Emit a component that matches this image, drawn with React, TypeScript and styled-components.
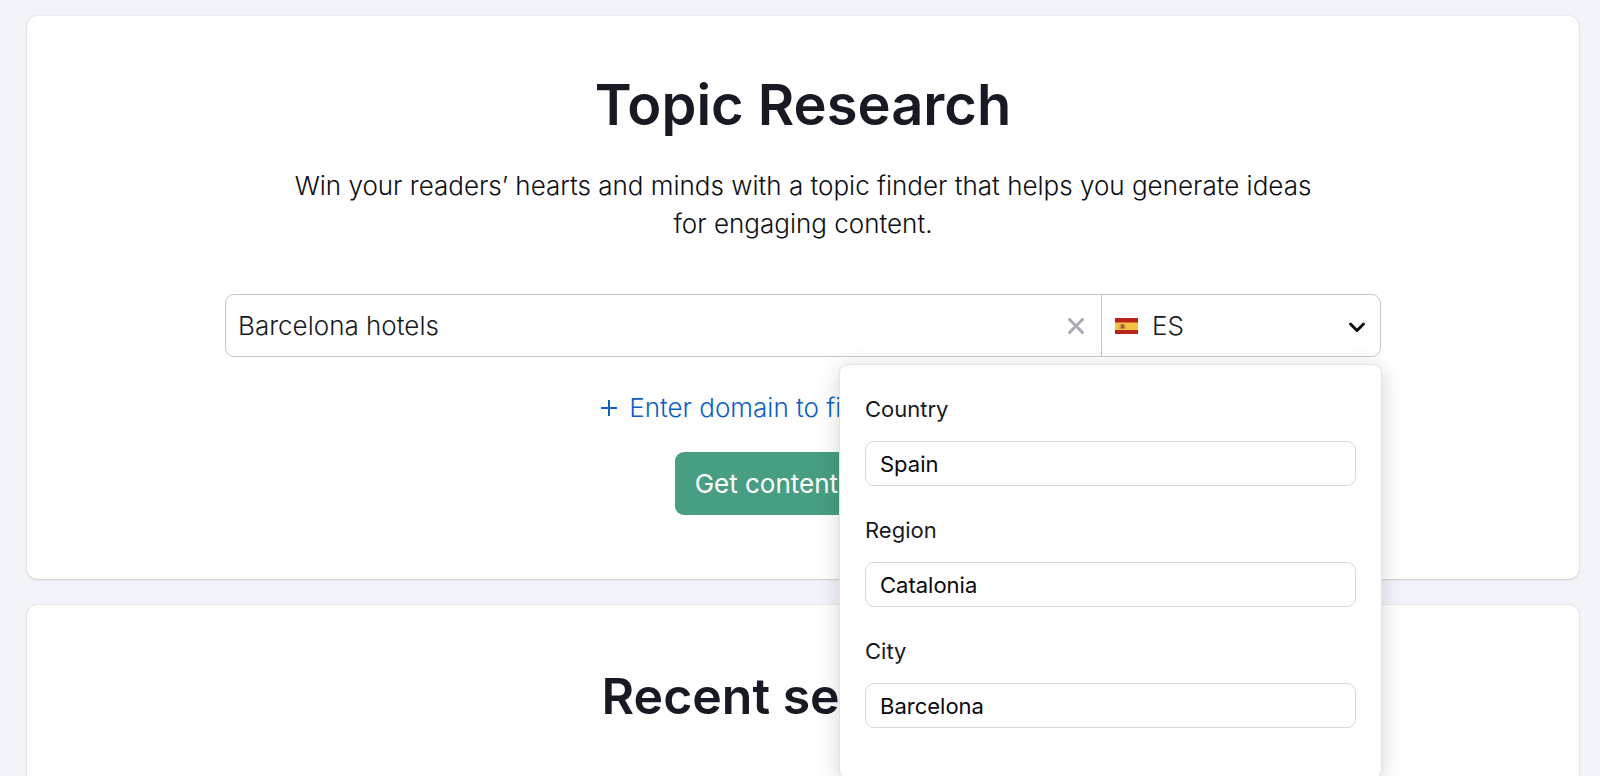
import React, { useState } from "react";
import styled, { createGlobalStyle } from "styled-components";

const GlobalStyle = createGlobalStyle`
  *, *::before, *::after { box-sizing: border-box; }
  body {
    margin: 0;
    background: #f3f4f9;
    color: #171a22;
    font-family: Inter, "Liberation Sans", sans-serif;
  }
  button, input { font: inherit; color: inherit; }
`;

const Page = styled.main`
  display: flex;
  flex-direction: column;
  gap: 26px;
  height: 100vh;
  padding: 16px 21px 0 27px;
  overflow: hidden;
`;

const Card = styled.section<{ $fill?: boolean }>`
  display: flex;
  flex-direction: column;
  align-items: center;
  flex: ${(p) => (p.$fill ? "1 0 auto" : "0 0 auto")};
  padding: ${(p) => (p.$fill ? "60px 24px" : "54px 24px 64px")};
  border-radius: ${(p) => (p.$fill ? "10px 10px 0 0" : "10px")};
  background: #fff;
  box-shadow: 0 0 2px rgba(25, 27, 35, 0.14), 0 1px 2px rgba(25, 27, 35, 0.14);
`;

const Title = styled.h1`
  margin: 0;
  font-size: 56px;
  font-weight: 600;
  line-height: 70px;
`;

const Subtitle = styled.h2`
  margin: 0;
  font-size: 50px;
  font-weight: 600;
  line-height: 62px;
`;

const Lead = styled.p`
  max-width: 1040px;
  margin: 27px 0 0;
  color: #0c0d12;
  font-size: 26px;
  font-weight: 300;
  line-height: 38px;
  text-align: center;
`;

const SearchForm = styled.form`
  display: flex;
  flex-direction: column;
  align-items: center;
  width: 100%;
  max-width: 1156px;
  margin-top: 51px;
`;

const SearchBar = styled.div`
  position: relative;
  display: flex;
  width: 100%;
  height: 63px;
  border: 1px solid #c4c7cf;
  border-radius: 9px;
  background: #fff;
`;

const Query = styled.input`
  flex: 1;
  min-width: 0;
  padding: 0 12px;
  border: 0;
  outline: 0;
  background: transparent;
  font-size: 26px;
  font-weight: 300;
`;

const ClearButton = styled.button`
  display: flex;
  align-items: center;
  justify-content: center;
  width: 50px;
  padding: 0;
  border: 0;
  background: transparent;
  cursor: pointer;
`;

const LocationButton = styled.button`
  display: flex;
  align-items: center;
  gap: 14px;
  width: 279px;
  padding: 0 14px 0 13px;
  border: 0;
  border-left: 1px solid #c4c7cf;
  background: transparent;
  font-size: 26px;
  font-weight: 300;
  text-align: left;
  cursor: pointer;
`;

const Code = styled.span`
  flex: 1;
`;

const DomainLink = styled.a`
  display: flex;
  align-items: center;
  gap: 12px;
  margin-top: 32px;
  color: #0b5fc4;
  font-size: 26px;
  font-weight: 300;
  line-height: 38px;
  text-decoration: none;
`;

const SubmitButton = styled.button`
  height: 63px;
  margin-top: 25px;
  padding: 0 20px;
  border: 0;
  border-radius: 9px;
  background: #479e82;
  color: #fff;
  font-size: 26px;
  font-weight: 400;
  cursor: pointer;
`;

const LocationPanel = styled.div`
  position: absolute;
  z-index: 1;
  top: calc(100% + 8px);
  right: -2px;
  display: flex;
  flex-direction: column;
  gap: 28px;
  width: 543px;
  padding: 28px 25px 50px;
  border: 1px solid #e2e3ea;
  border-radius: 9px;
  background: #fff;
  box-shadow: 0 4px 22px rgba(25, 27, 35, 0.18);
`;

const Field = styled.label`
  display: flex;
  flex-direction: column;
  gap: 16px;
  font-size: 22px;
  font-weight: 400;
  line-height: 32px;
`;

const FieldInput = styled.input`
  width: 100%;
  height: 45px;
  padding: 0 14px;
  border: 1px solid #d5d7de;
  border-radius: 9px;
  outline: 0;
  background: #fff;
  color: #08090d;
`;

const ClearIcon = () => (
  <svg width="18" height="18" viewBox="0 0 18 18" fill="none" stroke="#a7a9b4" strokeWidth="3" strokeLinecap="round" aria-hidden="true">
    <path d="M2.500 2.500l13 13M15.500 2.500l-13 13" />
  </svg>
);

const ChevronIcon = () => (
  <svg width="18" height="18" viewBox="0 0 18 18" fill="none" stroke="#0c0d12" strokeWidth="3" strokeLinecap="round" strokeLinejoin="round" aria-hidden="true">
    <path d="M2.500 7l6.500 6.500L15.500 7" />
  </svg>
);

const PlusIcon = () => (
  <svg width="16" height="16" viewBox="0 0 16 16" fill="none" stroke="#0b5fc4" strokeWidth="2" aria-hidden="true">
    <path d="M8 0v16M0 8h16" />
  </svg>
);

const SpainFlag = () => (
  <svg width="23" height="16" viewBox="0 0 23 16" aria-hidden="true">
    <path fill="#b9231c" d="M0 0h23v16H0z" />
    <path fill="#f4c343" d="M0 4.500h23v7.500H0z" />
    <path fill="#d79a45" d="M4.500 7h6v4h-6z" />
    <path fill="#a8502f" d="M6 6h2.500v1H6zM6 7.200h3.200v2.800l-1.600.8L6 10z" />
    <path fill="#8e6a78" d="M7.200 8h1.200v1.300H7.200z" />
  </svg>
);

export default function App() {
  const [query, setQuery] = useState("Barcelona hotels");
  const [place, setPlace] = useState({ Country: "Spain", Region: "Catalonia", City: "Barcelona" });
  const [open, setOpen] = useState(true);

  return (
    <>
      <GlobalStyle />
      <Page>
        <Card>
          <Title>Topic Research</Title>
          <Lead>
            Win your readers’ hearts and minds with a topic finder that helps you generate ideas for engaging content.
          </Lead>
          <SearchForm onSubmit={(e) => e.preventDefault()}>
            <SearchBar>
              <Query aria-label="Topic" value={query} onChange={(e) => setQuery(e.target.value)} />
              <ClearButton type="button" aria-label="Clear" onClick={() => setQuery("")}>
                <ClearIcon />
              </ClearButton>
              <LocationButton type="button" aria-expanded={open} onClick={() => setOpen(!open)}>
                <SpainFlag />
                <Code>ES</Code>
                <ChevronIcon />
              </LocationButton>
              {open && (
                <LocationPanel>
                  {(Object.keys(place) as (keyof typeof place)[]).map((name) => (
                    <Field key={name}>
                      {name}
                      <FieldInput value={place[name]} onChange={(e) => setPlace({ ...place, [name]: e.target.value })} />
                    </Field>
                  ))}
                </LocationPanel>
              )}
            </SearchBar>
            <DomainLink href="#domain">
              <PlusIcon />
              Enter domain to find its content
            </DomainLink>
            <SubmitButton type="submit">Get content ideas</SubmitButton>
          </SearchForm>
        </Card>
        <Card $fill>
          <Subtitle>Recent searches</Subtitle>
        </Card>
      </Page>
    </>
  );
}
